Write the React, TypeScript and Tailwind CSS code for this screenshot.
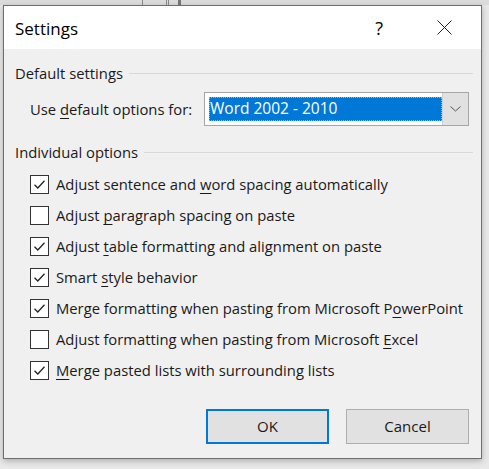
import React from "react";

const U = ({ children }: { children: React.ReactNode }) => (
  <span className="underline underline-offset-[3px] decoration-1">{children}</span>
);

const Check = ({ checked, label }: { checked: boolean; label: React.ReactNode }) => (
  <div className="flex items-center h-[31px]">
    <div className="w-[19px] h-[19px] border border-[#333333] bg-white flex items-center justify-center shrink-0">
      {checked && (
        <svg width="15" height="15" viewBox="0 0 15 15">
          <path d="M2.5 7.8 L5.8 11 L12.5 3.8" fill="none" stroke="#222" strokeWidth="1.3" />
        </svg>
      )}
    </div>
    <span className="ml-[7px]">{label}</span>
  </div>
);

export default function App() {
  return (
    <div
      className="w-[489px] h-[469px] bg-[#e8e8e8] relative overflow-hidden text-[#1a1a1a]"
      style={{ fontFamily: '"Open Sans", "Noto Sans", sans-serif' }}
    >
      {/* background strip */}
      <div className="h-[5px] w-full bg-[#dcdcdc] flex">
        <div className="ml-[142px] w-px bg-[#888]" />
        <div className="ml-[23px] w-px bg-[#888]" />
        <div className="ml-px w-px bg-[#888]" />
        <div className="ml-[9px] w-[3px] bg-[#777]" />
      </div>
      <div className="absolute left-[3px] top-[5px] w-[479px] h-[454px] border border-[#6e6e6e] bg-[#f0f0f0] flex flex-col shadow-[0_2px_6px_rgba(0,0,0,0.25)]">
        {/* title bar */}
        <div className="h-[43px] bg-white flex items-center text-[17px] text-black shrink-0">
          <span className="ml-[11px] mt-[2px]">Settings</span>
          <span className="ml-auto mr-[54px] text-[18px] mt-[1px]">?</span>
          <svg width="15" height="15" viewBox="0 0 15 15" className="mr-[29px]">
            <path d="M0.5 0.5 L14.5 14.5 M14.5 0.5 L0.5 14.5" stroke="#222" strokeWidth="1" />
          </svg>
        </div>
        <div className="px-[11px] text-[14.8px]">
          <div className="flex items-center mt-[14px] h-[20px]">
            <span>Default settings</span>
            <div className="flex-1 h-px bg-[#d8d8d8] ml-[6px] mr-[-3px]" />
          </div>
          <div className="flex items-center mt-[9px] h-[34px]">
            <span className="ml-[15px]">
              Use <U>d</U>efault options for:
            </span>
            <div className="ml-auto mr-[1px] w-[265px] h-[34px] border border-[#a6a6a6] bg-white flex items-center p-[4px]">
              <div className="flex-1 h-full bg-[#0078d7] text-white flex items-center pl-[1px] outline-1 outline-dotted outline-[#e0a070] -outline-offset-1 text-[15.5px]">
                Word 2002 - 2010
              </div>
              <div className="w-[26px] h-[32px] -my-[4px] -mr-[4px] bg-[#e1e1e1] border-l border-[#cfcfcf] flex items-center justify-center">
                <svg width="11" height="6" viewBox="0 0 11 6">
                  <path d="M0.5 0.5 L5.5 5 L10.5 0.5" fill="none" stroke="#555" strokeWidth="1" />
                </svg>
              </div>
            </div>
          </div>
          <div className="flex items-center mt-[16px] h-[20px]">
            <span>Individual options</span>
            <div className="flex-1 h-px bg-[#d8d8d8] ml-[6px] mr-[-3px]" />
          </div>
          <div className="ml-[15px] mt-[7px] flex flex-col">
            <Check checked label={<>Adjust sentence and <U>w</U>ord spacing automatically</>} />
            <Check checked={false} label={<>Adjust <U>p</U>aragraph spacing on paste</>} />
            <Check checked label={<>Adjust <U>t</U>able formatting and alignment on paste</>} />
            <Check checked label={<>Smart <U>s</U>tyle behavior</>} />
            <Check checked label={<>Merge formatting when pasting from Microsoft P<U>o</U>werPoint</>} />
            <Check checked={false} label={<>Adjust formatting when pasting from Microsoft <U>E</U>xcel</>} />
            <Check checked label={<><U>M</U>erge pasted lists with surrounding lists</>} />
          </div>
          <div className="flex justify-end gap-[17px] mt-[23px] mr-[1px]">
            <button className="w-[123px] h-[35px] bg-[#e1e1e1] border-2 border-[#0078d7] flex items-center justify-center text-[15px]">
              OK
            </button>
            <button className="w-[123px] h-[35px] bg-[#e1e1e1] border border-[#adadad] flex items-center justify-center text-[15px]">
              Cancel
            </button>
          </div>
        </div>
      </div>
    </div>
  );
}
